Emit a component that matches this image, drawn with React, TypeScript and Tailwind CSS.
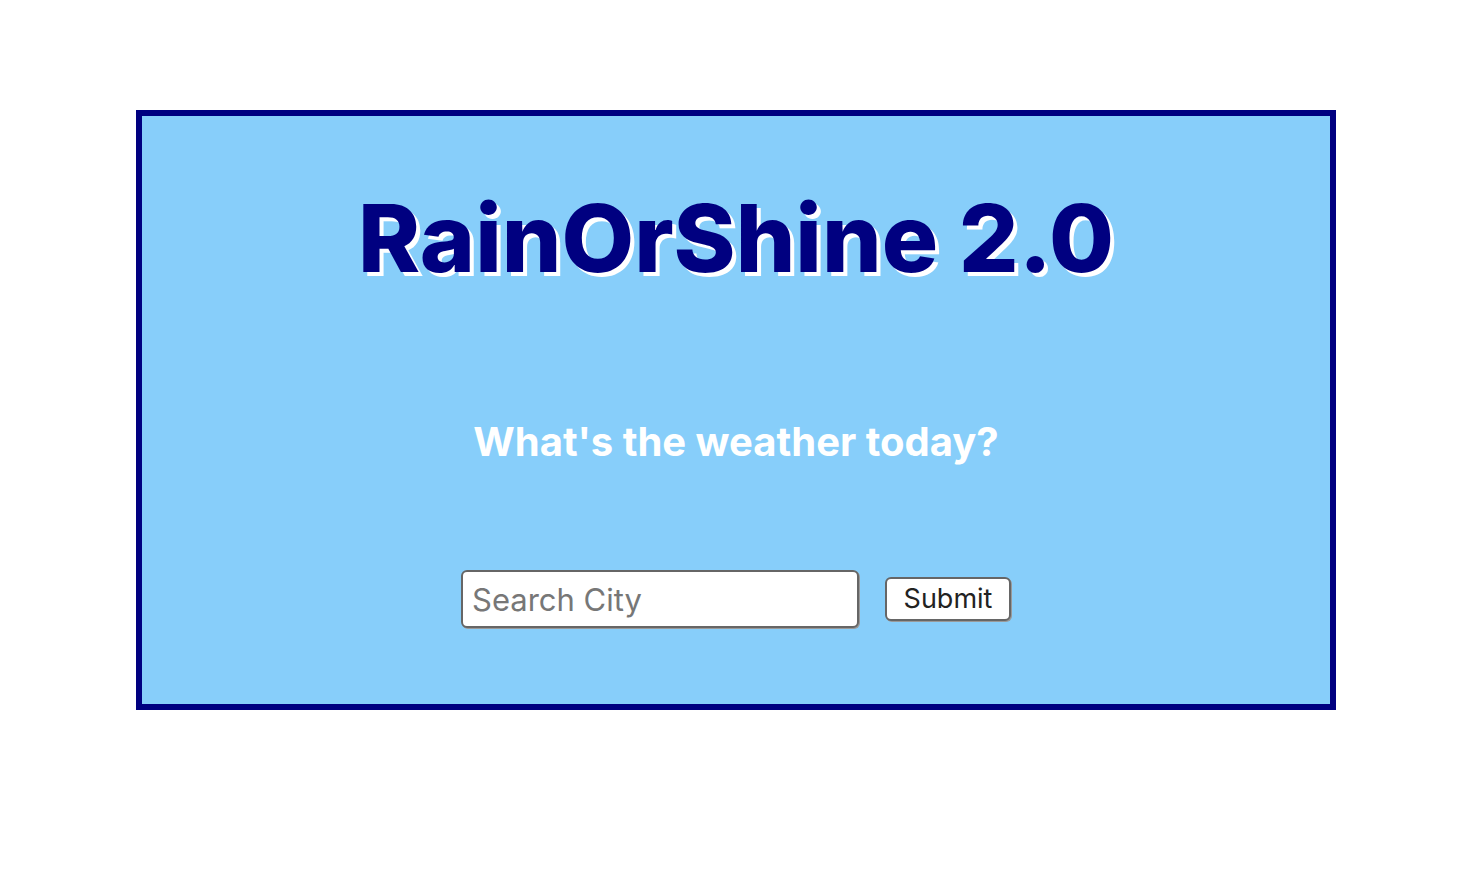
export default function App() {
  return (
    <div className="min-h-screen bg-white pt-[110px]" style={{ fontFamily: "Inter, 'Noto Sans', sans-serif" }}>
      <div className="ml-[136px] flex h-[600px] w-[1200px] flex-col items-center border-[6px] border-[#000080] bg-[#87cefa]">
        <h1 className="mt-[64px] text-[94px] leading-[116px] font-extrabold text-[#000080] [text-shadow:4px_4px_0_#ffffff]">
          RainOrShine 2.0
        </h1>
        <h2 className="mt-[122px] text-[40px] leading-[48px] font-bold text-white">
          What's the weather today?
        </h2>
        <form className="mt-[104px] flex items-center gap-[26px]" onSubmit={(e) => e.preventDefault()}>
          <input
            type="text"
            placeholder="Search City"
            className="h-[58px] w-[398px] rounded-[6px] border-2 border-[#666] bg-white px-[9px] text-[31px] text-[#222] placeholder:text-[#777] outline-none shadow-[1px_1px_0_#999]"
          />
          <button
            type="submit"
            className="h-[44px] w-[126px] rounded-[6px] border-2 border-[#666] bg-white text-[27px] text-[#222] shadow-[1px_1px_0_#999]"
          >
            Submit
          </button>
        </form>
      </div>
    </div>
  )
}
